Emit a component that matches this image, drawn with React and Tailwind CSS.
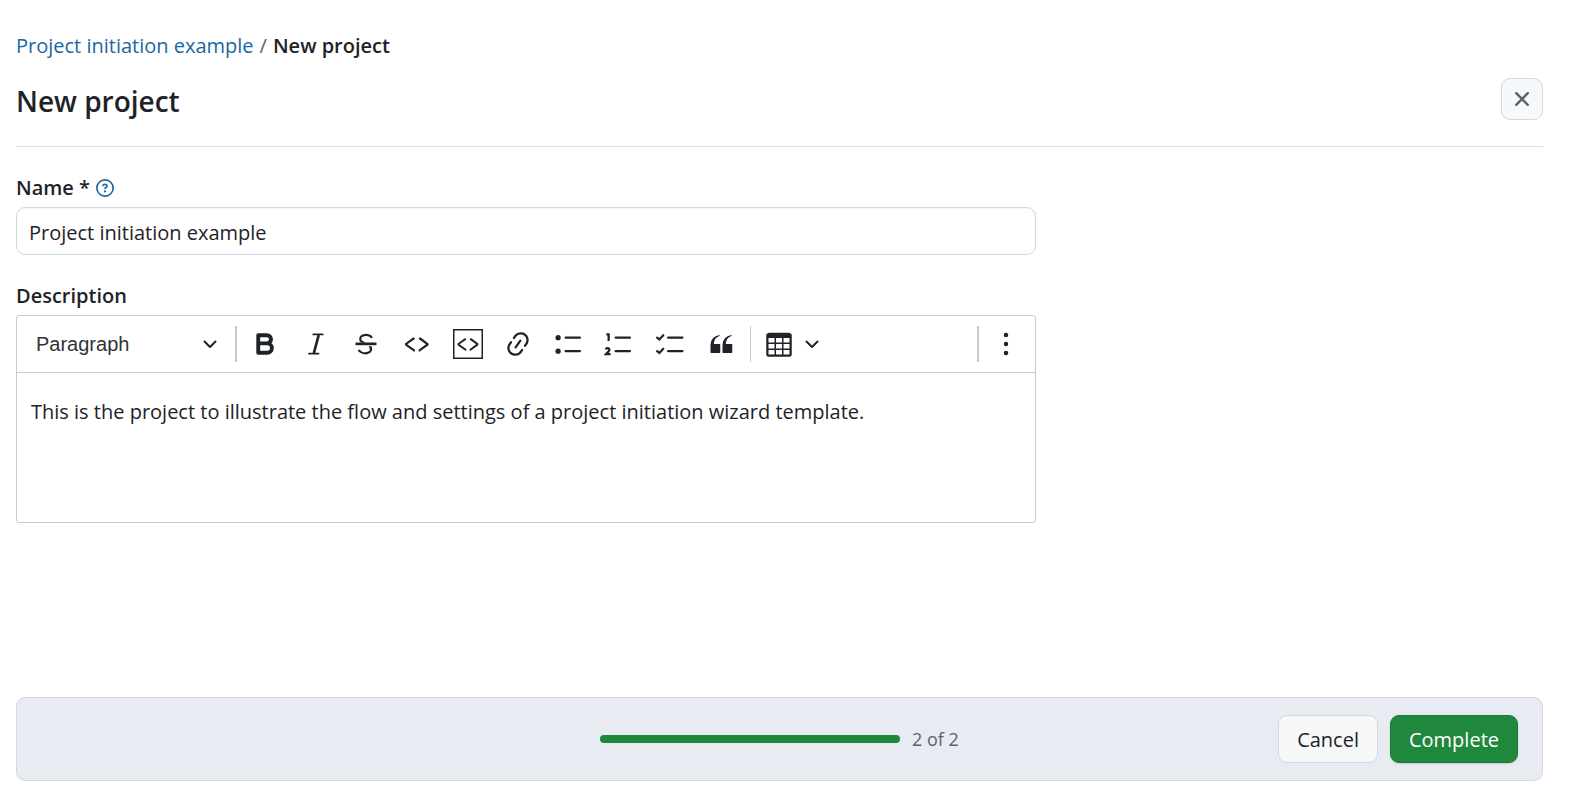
import React, { useState } from 'react';

function Icon({ children, className = 'size-[30px]' }) {
  return (
    <svg viewBox="0 0 20 20" fill="currentColor" className={className} aria-hidden="true">
      {children}
    </svg>
  );
}

function Chevron({ className }) {
  return (
    <svg
      viewBox="0 0 16 16"
      fill="none"
      stroke="currentColor"
      strokeWidth="2"
      strokeLinecap="round"
      strokeLinejoin="round"
      className={className}
      aria-hidden="true"
    >
      <path d="M2.5 5.5 8 11l5.5-5.5" />
    </svg>
  );
}

const angles = (
  <path d="m12.5 5.7 5.2 3.9v1.3l-5.6 4c-.1.2-.3.2-.5.2-.3-.1-.6-.7-.6-1l.3-.4 4.7-3.5L11.5 7l-.2-.2c-.1-.3-.1-.6 0-.8.2-.2.5-.4.8-.4a.8.8 0 0 1 .4.1zm-5.2 0L2 9.6v1.3l5.6 4c.1.2.3.2.5.2.3-.1.7-.7.6-1 0-.1 0-.3-.2-.4l-5-3.5L8.2 7l.2-.2c.1-.3.1-.6 0-.8-.2-.2-.5-.4-.8-.4a.8.8 0 0 0-.3.1z" />
);

const tools = [
  {
    label: 'Bold',
    icon: (
      <path
        d="M5.5 4.2h5.8a2.7 2.7 0 0 1 0 5.4H5.5zM5.5 9.6h6a3.1 3.1 0 0 1 0 6.2h-6z"
        fill="none"
        stroke="currentColor"
        strokeWidth="2.6"
        strokeLinejoin="round"
      />
    ),
  },
  {
    label: 'Italic',
    icon: (
      <g fill="none" stroke="currentColor" strokeLinecap="round">
        <path d="M8.2 3.6h6.3M5.3 16.4h6.4" strokeWidth="1.2" />
        <path d="M11.8 4 8.6 16" strokeWidth="1.8" strokeLinecap="butt" />
      </g>
    ),
  },
  {
    label: 'Strikethrough',
    icon: (
      <>
        <path d="M7 16.4c-.8-.4-1.5-.9-2.2-1.5a.6.6 0 0 1-.2-.5l.3-.6h1c1 1.2 2.1 1.7 3.7 1.7 1 0 1.8-.3 2.3-.6.6-.4.6-1.2.6-1.3.2-1.2-.9-2.1-.9-2.1h2.1c.3.7.4 1.2.4 1.7v.8l-.6 1.2c-.6.8-1.1 1-1.6 1.2a6 6 0 0 1-2.4.6c-1 0-1.8-.3-2.5-.6zM6.8 9 6 8.3c-.4-.5-.5-.8-.5-1.6 0-.7.1-1.3.5-1.8.4-.6 1-1 1.6-1.3a6.3 6.3 0 0 1 4.7 0 4 4 0 0 1 1.7 1l.3.7c0 .1.2.4-.2.7-.4.2-.9.1-1 0a3 3 0 0 0-1.2-1c-.4-.2-1-.3-2-.4-.7 0-1.4.2-2 .6-.8.6-1 .8-1 1.5 0 .8.5 1 1.2 1.5.6.4 1.1.7 1.9 1H6.8z" />
        <path d="M3 10.8V9h14v1.8z" />
      </>
    ),
  },
  { label: 'Code', icon: angles },
  {
    label: 'Code block',
    icon: (
      <>
        <rect x="0.5" y="0.5" width="19" height="19" fill="none" stroke="currentColor" />
        <g transform="translate(1.3 1.2) scale(.88)">{angles}</g>
      </>
    ),
  },
  {
    label: 'Link',
    icon: (
      <path d="m11.077 15 .991-1.416a.75.75 0 1 1 1.229.86l-1.148 1.64a.748.748 0 0 1-.217.206 5.251 5.251 0 0 1-8.503-5.955.741.741 0 0 1 .12-.274l1.147-1.639a.75.75 0 1 1 1.228.86L4.933 10.7l.006.003a3.75 3.75 0 0 0 6.132 4.294l.006.004zm5.494-5.335a.748.748 0 0 1-.12.274l-1.147 1.639a.75.75 0 1 1-1.228-.86l.86-1.23a3.75 3.75 0 0 0-6.144-4.301l-.86 1.229a.75.75 0 0 1-1.229-.86l1.148-1.64a.748.748 0 0 1 .217-.206 5.251 5.251 0 0 1 8.503 5.955zm-4.563-2.532a.75.75 0 0 1 .184 1.045l-3.155 4.505a.75.75 0 1 1-1.229-.86l3.155-4.506a.75.75 0 0 1 1.045-.184z" />
    ),
  },
  {
    label: 'Bulleted list',
    icon: (
      <>
        <circle cx="2.75" cy="5.75" r="1.75" />
        <circle cx="2.75" cy="14.75" r="1.75" />
        <rect x="7" y="5" width="11" height="1.5" rx=".75" />
        <rect x="7" y="14" width="11" height="1.5" rx=".75" />
      </>
    ),
  },
  {
    label: 'Numbered list',
    icon: (
      <>
        <rect x="7" y="5" width="11" height="1.5" rx=".75" />
        <rect x="7" y="14" width="11" height="1.5" rx=".75" />
        <path
          d="M1.6 3.6h1.5V8M1.2 13.6c.3-1.3 2.6-1 2.4.3-.1.9-1.3 1.9-2.2 2.8h3"
          fill="none"
          stroke="currentColor"
          strokeWidth="1.5"
        />
      </>
    ),
  },
  {
    label: 'To-do list',
    icon: (
      <>
        <rect x="8" y="5" width="11" height="1.5" rx=".75" />
        <rect x="8" y="14" width="11" height="1.5" rx=".75" />
        <path
          d="m1.4 5.8 1.5 1.2 2.6-2.8M1.4 14.8l1.5 1.2 2.6-2.8"
          fill="none"
          stroke="currentColor"
          strokeWidth="1.5"
          strokeLinecap="round"
        />
      </>
    ),
  },
  {
    label: 'Block quote',
    icon: (
      <path d="M3 10.423a6.5 6.5 0 0 1 6.056-6.408l.038.67C6.448 5.423 5.354 7.663 5.22 10H9c.552 0 .5.432.5.986v4.511c0 .554-.448.503-1 .503h-5c-.552 0-.5-.449-.5-1.003v-4.574zm8 0a6.5 6.5 0 0 1 6.056-6.408l.038.67c-2.646.739-3.74 2.979-3.873 5.315H17c.552 0 .5.432.5.986v4.511c0 .554-.448.503-1 .503h-5c-.552 0-.5-.449-.5-1.003v-4.574z" />
    ),
  },
];

function Toolbar() {
  return (
    <div role="toolbar" aria-label="Editor toolbar" className="flex items-center h-[57px] border-b border-[#c8cacd]">
      <div className="relative w-[218px]">
        <select
          aria-label="Heading"
          className="w-full h-9 pl-[19px] appearance-none bg-transparent font-['Liberation_Sans',sans-serif] text-xl text-[#333333] outline-none"
        >
          <option>Paragraph</option>
          <option>Heading 1</option>
          <option>Heading 2</option>
        </select>
        <Chevron className="absolute right-[17px] top-2.5 size-4 pointer-events-none" />
      </div>
      <span className="w-0.5 h-9 bg-[#c8cacf]" />
      <div className="flex w-[506px] ml-[3px]">
        {tools.map((tool) => (
          <button key={tool.label} type="button" aria-label={tool.label} className="flex-1 flex justify-center">
            <Icon>{tool.icon}</Icon>
          </button>
        ))}
      </div>
      <span className="w-px h-9 ml-1 bg-[#c8cacf]" />
      <button type="button" aria-label="Insert table" className="flex items-center gap-2.5 ml-[13px]">
        <Icon>
          <path d="M3 6v3h4V6H3zm0 4v3h4v-3H3zm0 4v3h4v-3H3zm5 3h4v-3H8v3zm5 0h4v-3h-4v3zm4-4v-3h-4v3h4zm0-4V6h-4v3h4zm1.5 8a1.5 1.5 0 0 1-1.5 1.5H3A1.5 1.5 0 0 1 1.5 17V4c.222-.863 1.068-1.5 2-1.5h13c.932 0 1.778.637 2 1.5v13zM12 13v-3H8v3h4zm0-4V6H8v3h4z" />
        </Icon>
        <Chevron className="size-4" />
      </button>
      <span className="w-0.5 h-9 ml-auto bg-[#c8cacf]" />
      <button type="button" aria-label="Show more items" className="flex justify-center w-14 pr-0.5">
        <Icon>
          <circle cx="10" cy="4" r="1.5" />
          <circle cx="10" cy="10" r="1.5" />
          <circle cx="10" cy="16" r="1.5" />
        </Icon>
      </button>
    </div>
  );
}

export default function App() {
  const [name, setName] = useState('Project initiation example');
  const [description, setDescription] = useState(
    'This is the project to illustrate the flow and settings of a project initiation wizard template.'
  );

  return (
    <div className="flex flex-col min-h-screen pt-[30px] pb-3.5 pl-4 pr-[30px] bg-white font-['Open_Sans',sans-serif] text-xl leading-8 text-[#1f2328]">
      <nav aria-label="Breadcrumb" className="flex gap-1.5">
        <a href="#" className="text-[#1a67a3] hover:underline">Project initiation example</a>
        <span className="text-[#59636e]">/</span>
        <span className="font-semibold">New project</span>
      </nav>

      <header className="flex items-center justify-between mt-4 pb-[26px] border-b border-[#d8dfe6]">
        <h1 className="pt-1 text-[28px] font-semibold">New project</h1>
        <button
          type="button"
          aria-label="Close"
          className="flex items-center justify-center size-[42px] rounded-[9px] border border-[#d1d9e0] bg-[#f6f8fa] text-[#59636e]"
        >
          <svg viewBox="0 0 16 16" fill="none" stroke="currentColor" strokeWidth="2.4" strokeLinecap="round" className="size-4">
            <path d="m2.2 2.2 11.6 11.6M13.8 2.2 2.2 13.8" />
          </svg>
        </button>
      </header>

      <form className="flex flex-col grow">
        <div className="w-full max-w-[1020px] mt-[25px]">
          <div className="flex items-center gap-1.5">
            <label htmlFor="name" className="font-semibold">Name *</label>
            <a href="#" aria-label="Help" className="text-[#1a67a3]">
              <svg viewBox="0 0 16 16" fill="currentColor" className="size-[18px]">
                <path d="M0 8a8 8 0 1 1 16 0A8 8 0 0 1 0 8Zm8-6.5a6.5 6.5 0 1 0 0 13 6.5 6.5 0 0 0 0-13ZM6.92 6.085h.001a.749.749 0 1 1-1.342-.67c.169-.339.436-.701.849-.977C6.845 4.16 7.369 4 8 4a2.756 2.756 0 0 1 1.637.525c.503.377.863.965.863 1.725 0 .448-.115.83-.329 1.15-.205.307-.47.513-.692.662-.109.072-.22.138-.313.195l-.006.004a6.24 6.24 0 0 0-.26.16.952.952 0 0 0-.276.245.75.75 0 0 1-1.248-.832c.184-.264.42-.489.692-.661.103-.067.207-.132.313-.195l.007-.004c.1-.061.182-.11.258-.161a.969.969 0 0 0 .277-.245C8.96 6.514 9 6.427 9 6.25a.612.612 0 0 0-.262-.525A1.27 1.27 0 0 0 8 5.5c-.369 0-.595.09-.74.187a1.01 1.01 0 0 0-.34.398ZM9 11a1 1 0 1 1-2 0 1 1 0 0 1 2 0Z" />
              </svg>
            </a>
          </div>
          <input
            id="name"
            type="text"
            required
            value={name}
            onChange={(e) => setName(e.target.value)}
            className="w-full h-12 mt-[3px] px-3 pt-0.5 rounded-[9px] border border-[#d1d9e0] shadow-[inset_0_1px_0_rgba(31,35,40,0.04)] outline-none"
          />
        </div>

        <div className="w-full max-w-[1020px] mt-[25px]">
          <label htmlFor="description" className="block font-semibold">Description</label>
          <div className="mt-[3px] rounded-[3px] border border-[#c8cacd]">
            <Toolbar />
            <textarea
              id="description"
              value={description}
              onChange={(e) => setDescription(e.target.value)}
              className="block w-full h-[149px] px-3.5 pt-[23px] resize-none outline-none"
            />
          </div>
        </div>

        <footer className="grid grid-cols-[1fr_auto_1fr] items-center mt-auto py-[17px] px-6 rounded-[9px] border border-[#d1d9e0] bg-[#e8ebf2]">
          <div className="flex items-center gap-3 col-start-2">
            <div
              role="progressbar"
              aria-label="Progress"
              aria-valuenow={2}
              aria-valuemax={2}
              className="w-[300px] h-2 rounded-full bg-[#1f883d]"
            />
            <span className="text-lg text-[#59636e]">2 of 2</span>
          </div>
          <div className="flex justify-end gap-3">
            <button type="button" className="h-12 px-[18px] pt-0.5 rounded-[9px] border border-[#d1d9e0] bg-[#f6f8fa]">
              Cancel
            </button>
            <button
              type="submit"
              className="h-12 px-[18px] pt-0.5 rounded-[9px] border border-[#1c7a37] bg-[#1f883d] text-white shadow-[0_1px_2px_rgba(31,35,40,0.15)]"
            >
              Complete
            </button>
          </div>
        </footer>
      </form>
    </div>
  );
}
